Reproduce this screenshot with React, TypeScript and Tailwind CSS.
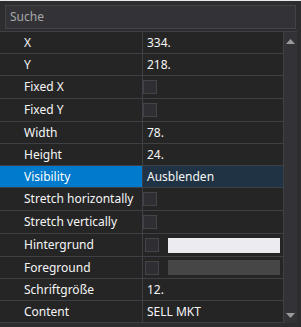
import React from "react";

type Row = {
  label: string;
  h: string;
  kind: "text" | "check" | "swatch";
  value?: string;
  swatch?: string;
  selected?: boolean;
};

const rows: Row[] = [
  { label: "X", h: "h-[22px]", kind: "text", value: "334." },
  { label: "Y", h: "h-[22px]", kind: "text", value: "218." },
  { label: "Fixed X", h: "h-[23px]", kind: "check" },
  { label: "Fixed Y", h: "h-[23px]", kind: "check" },
  { label: "Width", h: "h-[22px]", kind: "text", value: "78." },
  { label: "Height", h: "h-[22px]", kind: "text", value: "24." },
  { label: "Visibility", h: "h-[22px]", kind: "text", value: "Ausblenden", selected: true },
  { label: "Stretch horizontally", h: "h-[23px]", kind: "check" },
  { label: "Stretch vertically", h: "h-[23px]", kind: "check" },
  { label: "Hintergrund", h: "h-[23px]", kind: "swatch", swatch: "bg-[#ececf0]" },
  { label: "Foreground", h: "h-[22px]", kind: "swatch", swatch: "bg-[#464646]" },
  { label: "Schriftgröße", h: "h-[22px]", kind: "text", value: "12." },
  { label: "Content", h: "h-[22px]", kind: "text", value: "SELL MKT" },
];

function Check({ className = "" }: { className?: string }) {
  return <div className={"w-[14px] h-[14px] bg-[#2f2f33] border border-[#444448] " + className} />;
}

export default function App() {
  return (
    <div
      className="w-[301px] h-[327px] bg-[#2d2d30] border-t border-[#e8e8e8] overflow-hidden flex flex-col text-[12px] text-[#f6f6f6]"
      style={{ fontFamily: '"Noto Sans", "Open Sans", sans-serif' }}
    >
      <div className="mx-[5px] mt-[4px] h-[24px] border border-[#434346] bg-[#333337] flex items-center pl-[4px] text-[#a8a8a8] leading-none">
        Suche
      </div>
      <div className="mt-[2px] flex">
        <div className="w-[283px] border-t border-[#3f3f46] bg-[#252526]">
          {rows.map((r) => (
            <div key={r.label} className={"flex border-b border-[#3f3f46] " + r.h}>
              <div
                className={
                  "w-[142px] shrink-0 flex items-center pl-[24px] whitespace-nowrap leading-none " +
                  (r.selected ? "bg-[#007acc] text-white" : "")
                }
              >
                {r.label}
              </div>
              <div className="w-px shrink-0 bg-[#3f3f46]" />
              <div
                className={
                  "w-[140px] shrink-0 flex items-center leading-none " +
                  (r.selected ? "bg-[#1f3345]" : "")
                }
              >
                {r.kind === "text" && <span className="pl-[4px]">{r.value}</span>}
                {r.kind === "check" && <Check />}
                {r.kind === "swatch" && (
                  <div className="flex items-center pl-[2px] gap-[9px]">
                    <Check />
                    <div className={"w-[112px] h-[15px] " + r.swatch} />
                  </div>
                )}
              </div>
            </div>
          ))}
        </div>
        <div className="w-[14px] bg-[#333337] border-l border-[#3f3f46] border-t border-t-[#3f3f46] flex flex-col items-center justify-between pt-[7px] pb-[5px]">
          <svg width="9" height="5" viewBox="0 0 9 5">
            <polygon points="0,5 9,5 4.5,0" fill="#9a9a9a" />
          </svg>
          <svg width="9" height="5" viewBox="0 0 9 5">
            <polygon points="0,0 9,0 4.5,5" fill="#9a9a9a" />
          </svg>
        </div>
        <div className="w-[4px] bg-[#2d2d30]" />
      </div>
    </div>
  );
}
